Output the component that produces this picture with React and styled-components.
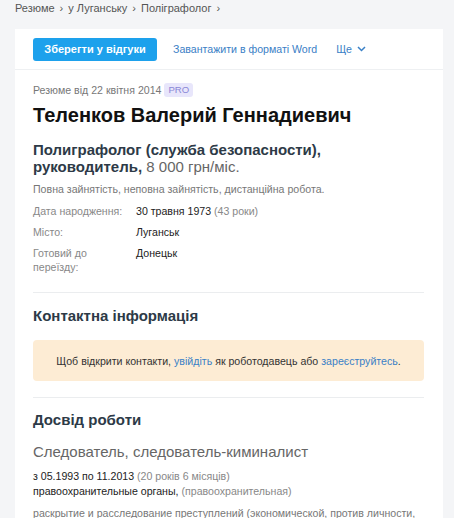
import React from "react";
import styled, { createGlobalStyle } from "styled-components";

const GlobalStyle = createGlobalStyle`
  body {
    margin: 0;
    background: #f4f5f7;
    font-family: "Liberation Sans", Arial, sans-serif;
    color: #222;
  }
`;

const Page = styled.div`
  padding: 0 11px 0 15px;
`;

const Crumbs = styled.div`
  display: flex;
  align-items: center;
  gap: 5px;
  height: 16px;
  margin-bottom: 13px;
  font-size: 11px;
  color: #555;
`;

const Sep = styled.span`
  font-size: 11px;
  color: #555;
`;

const Card = styled.div`
  background: #fff;
`;

const Toolbar = styled.div`
  display: flex;
  align-items: center;
  height: 40px;
  padding: 0 18px;
  border-bottom: 1px solid #eef0f2;
`;

const SaveButton = styled.button`
  height: 23px;
  width: 124px;
  padding: 0;
  border: none;
  border-radius: 3px;
  background: #1da1ec;
  color: #fff;
  font-family: inherit;
  font-size: 11px;
  font-weight: bold;
  margin-right: 16px;
`;

const ToolLink = styled.a`
  color: #3a80c6;
  font-size: 10.6px;
  margin-right: 19px;
  display: flex;
  align-items: center;
  gap: 5px;
`;

const Body = styled.div`
  padding: 13px 19px 0 18px;
`;

const Meta = styled.div`
  display: flex;
  align-items: center;
  gap: 3px;
  height: 14px;
  font-size: 10.6px;
  color: #777;
`;

const Badge = styled.span`
  background: #e8e6fb;
  color: #8a86d6;
  border-radius: 3px;
  padding: 1px 4px;
  line-height: 12px;
  font-size: 9.6px;
`;

const Name = styled.h1`
  margin: 6px 0 0;
  font-size: 20px;
  line-height: 24px;
  font-weight: bold;
  color: #111;
`;

const Position = styled.h2`
  margin: 14px 0 0;
  font-size: 15px;
  line-height: 17px;
  font-weight: bold;
  color: #2d3a47;
`;

const Salary = styled.span`
  font-weight: normal;
  color: #666;
`;

const Small = styled.div`
  font-size: 10.6px;
  color: #777;
  margin: ${(p) => p.$m || "0"};
  line-height: 14px;
  white-space: nowrap;
`;

const Info = styled.div`
  display: grid;
  grid-template-columns: 103px 1fr;
  row-gap: 7px;
  margin-top: 8px;
  font-size: 10.6px;
  line-height: 14px;
`;

const Label = styled.div`
  color: #888;
  padding-right: 12px;
`;

const Value = styled.div`
  color: #222;
`;

const Muted = styled.span`
  color: #888;
`;

const Divider = styled.hr`
  border: none;
  border-top: 1px solid #ebedef;
  margin: ${(p) => p.$m || "0"};
`;

const SectionTitle = styled.h3`
  margin: 0;
  font-size: 15px;
  line-height: 18px;
  font-weight: bold;
  color: #2d3a47;
`;

const Notice = styled.div`
  margin-top: 15px;
  height: 41px;
  display: flex;
  align-items: center;
  justify-content: center;
  background: #fdecd4;
  border-radius: 4px;
  font-size: 10.6px;
  color: #333;
`;

const Link = styled.a`
  color: #3a80c6;
  margin: ${(p) => (p.$last ? "0 0 0 3px" : "0 3px")};
`;

const JobTitle = styled.div`
  margin-top: 14px;
  font-size: 15px;
  line-height: 18px;
  color: #666;
`;

const Text = styled.div`
  font-size: 10.6px;
  line-height: 15px;
  color: #222;
  margin-top: ${(p) => p.$mt || 0}px;
`;

const Chevron = () => (
  <svg width="9" height="6" viewBox="0 0 9 6">
    <path d="M1 1l3.5 3.5L8 1" fill="none" stroke="#3a80c6" strokeWidth="1.5" />
  </svg>
);

export default function App() {
  return (
    <Page>
      <GlobalStyle />
      <Crumbs>
        <span>Резюме</span>
        <Sep>›</Sep>
        <span>у Луганську</span>
        <Sep>›</Sep>
        <span>Поліграфолог</span>
        <Sep>›</Sep>
      </Crumbs>
      <Card>
        <Toolbar>
          <SaveButton>Зберегти у відгуки</SaveButton>
          <ToolLink>Завантажити в форматі Word</ToolLink>
          <ToolLink>
            Ще <Chevron />
          </ToolLink>
        </Toolbar>
        <Body>
          <Meta>
            Резюме від 22 квітня 2014 <Badge>PRO</Badge>
          </Meta>
          <Name>Теленков Валерий Геннадиевич</Name>
          <Position>
            Полиграфолог (служба безопасности), руководитель,{" "}
            <Salary>8 000 грн/міс.</Salary>
          </Position>
          <Small $m="7px 0 0">Повна зайнятість, неповна зайнятість, дистанційна робота.</Small>
          <Info>
            <Label>Дата народження:</Label>
            <Value>
              30 травня 1973 <Muted>(43 роки)</Muted>
            </Value>
            <Label>Місто:</Label>
            <Value>Луганськ</Value>
            <Label>Готовий до переїзду:</Label>
            <Value>Донецьк</Value>
          </Info>
          <Divider $m="18px 0 14px" />
          <SectionTitle>Контактна інформація</SectionTitle>
          <Notice>
            Щоб відкрити контакти,<Link>увійдіть</Link>як роботодавець або
            <Link $last>зареєструйтесь</Link>.
          </Notice>
          <Divider $m="16px 0 13px" />
          <SectionTitle>Досвід роботи</SectionTitle>
          <JobTitle>Следователь, следователь-киминалист</JobTitle>
          <Text $mt={8}>
            з 05.1993 по 11.2013 <Muted>(20 років 6 місяців)</Muted>
          </Text>
          <Text>
            правоохранительные органы, <Muted>(правоохранительная)</Muted>
          </Text>
          <Small $m="7px 0 0">
            раскрытие и расследование преступлений (экономической, против личности,
          </Small>
        </Body>
      </Card>
    </Page>
  );
}
